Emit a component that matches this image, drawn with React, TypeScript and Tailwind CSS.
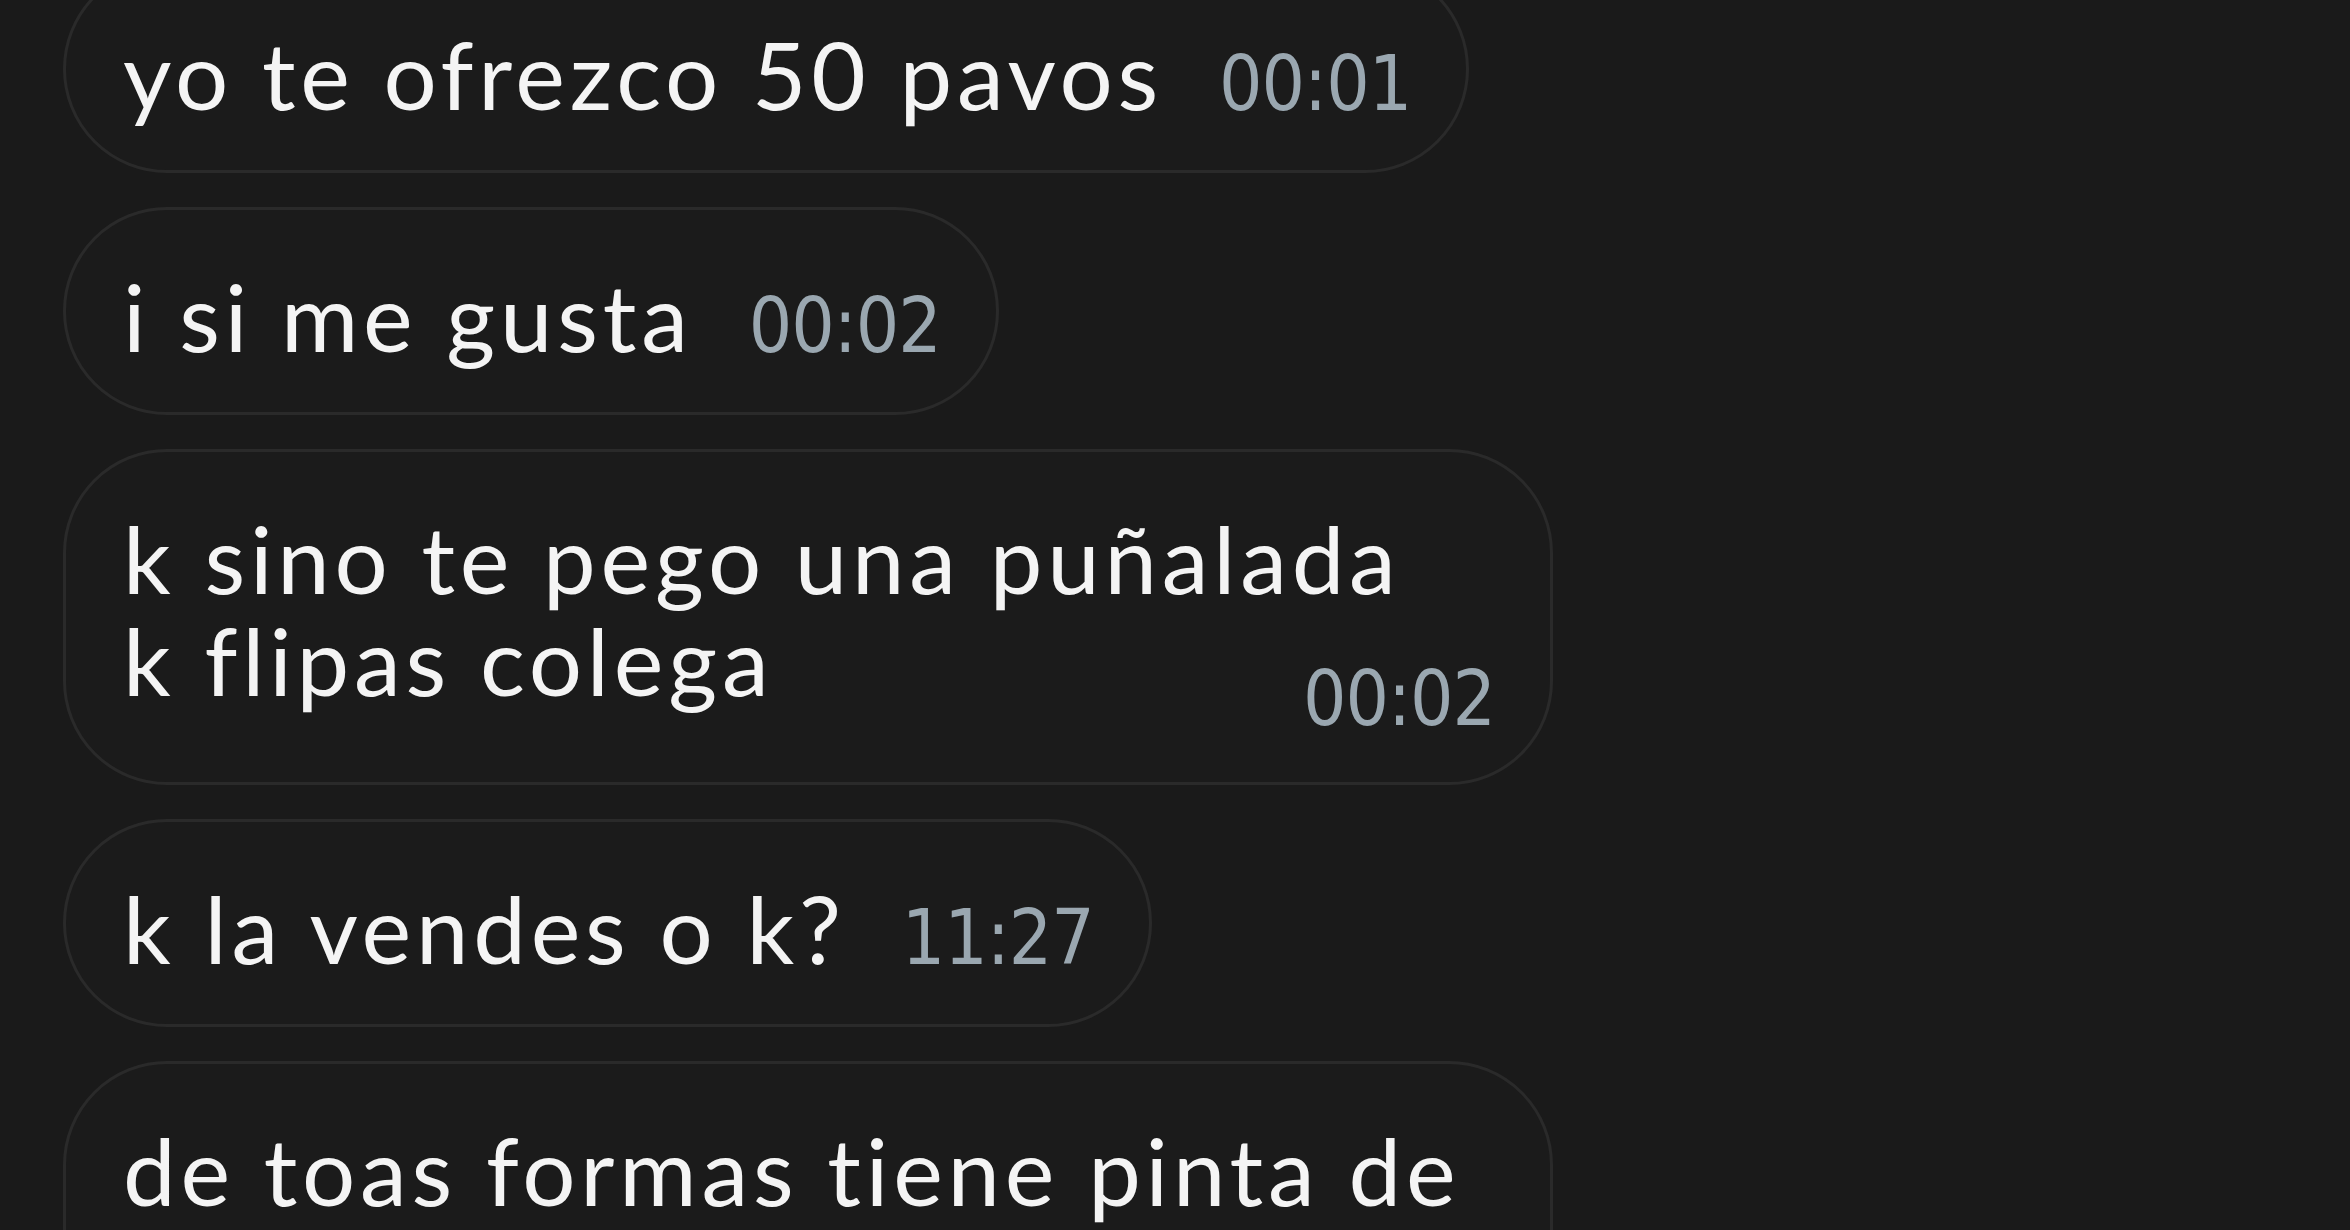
const messages = [
  { lines: ['yo te ofrezco 50 pavos'], time: '00:01' },
  { lines: ['i si me gusta'], time: '00:02' },
  { lines: ['k sino te pego una puñalada', 'k flipas colega'], time: '00:02' },
  { lines: ['k la vendes o k?'], time: '11:27' },
];

const textFont = { fontFamily: 'Lato, "Noto Sans", sans-serif' };
const timeFont = { fontFamily: '"DejaVu Sans Condensed", "DejaVu Sans", sans-serif', fontStretch: 'condensed' as const };

function Time({ value }: { value: string }) {
  return (
    <span className="text-[76px] leading-none tracking-[-1px] text-[#9aa7b0] whitespace-nowrap" style={timeFont}>
      {value}
    </span>
  );
}

export default function App() {
  return (
    <div className="w-[2350px] h-[1230px] overflow-hidden bg-[#1a1a1a]">
      <div className="flex flex-col items-start gap-[34px] pl-[63px] -mt-[35px]">
        {messages.map((m, i) =>
          m.lines.length === 1 ? (
            <div
              key={i}
              className="flex items-baseline gap-[56px] rounded-[104px] border-[3px] border-[#2a2a2a] bg-[#1b1b1b] pl-[57px] pr-[55px] pt-[55px] pb-[45px]"
            >
              <span className="text-[94px] leading-[102px] tracking-[4.8px] text-[#f4f4f4] whitespace-nowrap" style={textFont}>
                {m.lines[0]}
              </span>
              <Time value={m.time} />
            </div>
          ) : (
            <div
              key={i}
              className="w-[1490px] rounded-[104px] border-[3px] border-[#2a2a2a] bg-[#1b1b1b] pl-[57px] pr-[55px] pt-[55px] pb-[45px]"
            >
              {m.lines.map((l, j) => (
                <div key={j} className="text-[94px] leading-[102px] tracking-[4.8px] text-[#f4f4f4] whitespace-nowrap" style={textFont}>
                  {l}
                </div>
              ))}
              <div className="-mt-[50px] text-right">
                <Time value={m.time} />
              </div>
            </div>
          )
        )}
        <div className="w-[1490px] h-[400px] rounded-[104px] border-[3px] border-[#2a2a2a] bg-[#1b1b1b] pl-[57px] pr-[55px] pt-[55px]">
          <div className="text-[94px] leading-[102px] tracking-[4.8px] text-[#f4f4f4] whitespace-nowrap" style={textFont}>
            de toas formas tiene pinta de
          </div>
        </div>
      </div>
    </div>
  );
}
